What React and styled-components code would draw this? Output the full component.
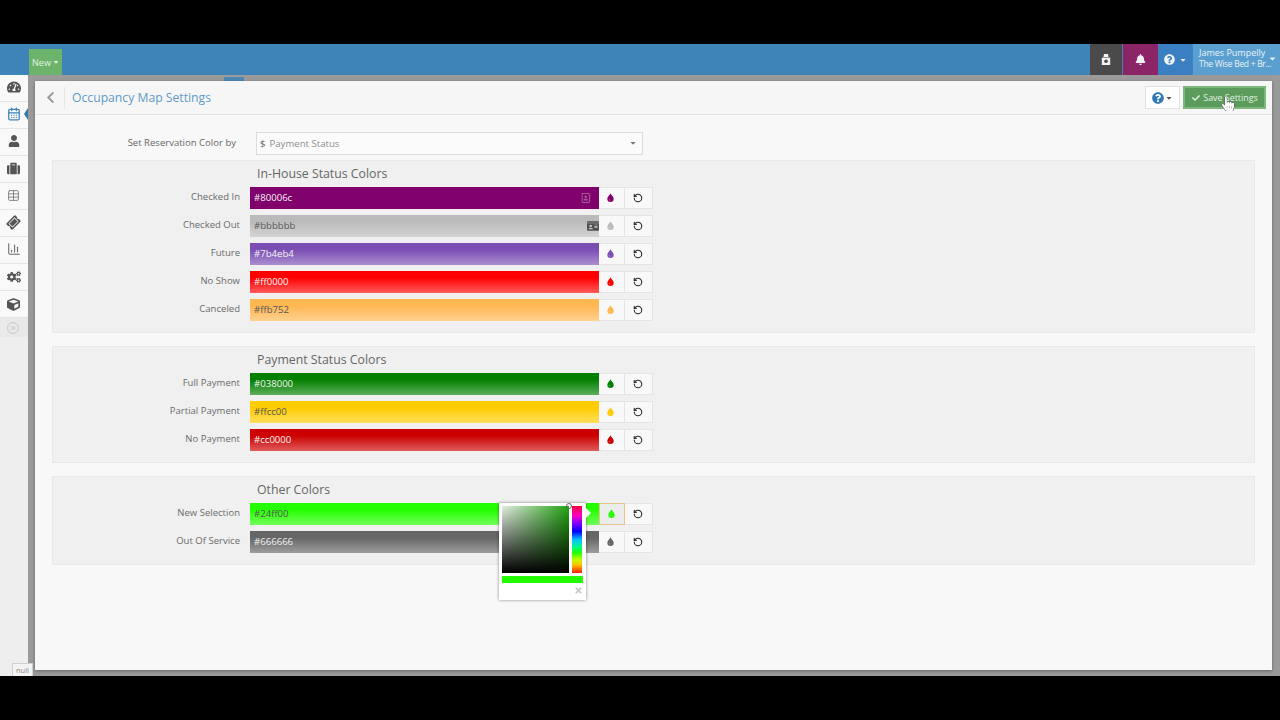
import React from "react";
import styled, { createGlobalStyle } from "styled-components";
import {
  FaTachometerAlt, FaUser, FaSuitcase, FaTicketAlt, FaCogs, FaCube,
  FaCheck, FaQuestionCircle, FaBell, FaChevronLeft, FaIdCard, FaRegAddressBook,
  FaCaretDown, FaHandPointer, FaTimes,
} from "react-icons/fa";
import { RotateCcw, CalendarDays, Table, ChartColumn } from "lucide-react";

const Global = createGlobalStyle`
  html, body { margin: 0; padding: 0; background: #000; }
  body { font-family: "Open Sans", "Liberation Sans", sans-serif; overflow: hidden; }
`;

const Screen = styled.div`
  width: 1280px; height: 720px; background: #000; padding: 44px 0; box-sizing: border-box;
`;
const Frame = styled.div`
  position: relative; width: 1280px; height: 632px; display: flex; flex-direction: column; overflow: hidden;
`;
const TopBar = styled.header`
  height: 31px; flex: none; background: #3f84b8; display: flex; align-items: stretch; padding-left: 29px;
`;
const NewButton = styled.div`
  width: 33px; margin-top: 5px; background: #6cb36c; color: #e4f2e4; font-size: 9px; padding-left: 1px; box-sizing: border-box;
  display: flex; align-items: center; justify-content: center; gap: 1px;
`;
const TopRight = styled.div`
  margin-left: auto; display: flex; align-items: stretch; gap: 1px;
`;
const TopCell = styled.div`
  width: ${p => p.$w}px; background: ${p => p.$bg}; color: #f2f2f2; font-size: 11px;
  display: flex; align-items: center; justify-content: center; gap: ${p => p.$gap || 3}px;
`;
const UserCell = styled.div`
  width: 87px; background: #5b9fd0; color: #e8f2f9; padding: 3px 0 0 6px; box-sizing: border-box; position: relative;
`;
const UserName = styled.div`font-size: 9px; line-height: 11px; white-space: nowrap;`;
const UserOrg = styled.div`font-size: 8.5px; line-height: 11px; white-space: nowrap; letter-spacing: -.3px;`;
const UserCaret = styled.span`
  position: absolute; right: 3px; top: 10px; font-size: 9px; display: flex;
`;
const Main = styled.div`flex: 1; display: flex; min-height: 0;`;
const Sidebar = styled.nav`
  width: 28px; flex: none; background: #eeeeee; display: flex; flex-direction: column;
`;
const SideItem = styled.div`
  height: 27px; box-sizing: border-box; background: #f9f9f9; border-bottom: 1px solid #e6e6e6;
  color: ${p => p.$active ? "#3f84b8" : "#555"}; font-size: 13px; position: relative;
  display: flex; align-items: center; justify-content: center; padding: 0 1px 2px 0;
  &:nth-child(n+8) { padding-bottom: 0; }
`;
const SideArrow = styled.span`
  position: absolute; right: 0; top: 6px; width: 0; height: 0;
  border-style: solid; border-width: 6px 4px 6px 0; border-color: transparent #2f77ad transparent transparent;
`;
const Ticket = styled.span`display: flex; transform: rotate(-45deg);`;
const SideToggle = styled.div`
  height: 19px; background: #e9e9e9; color: #c4c4c4;
  display: flex; align-items: center; justify-content: center; padding-right: 2px;
`;
const Backdrop = styled.div`
  flex: 1; background: #9a9a9a; padding: 6px 8px 6px 7px; position: relative; min-width: 0; display: flex;
`;
const BehindTab = styled.span`
  position: absolute; left: 196px; top: 2px; width: 20px; height: 4px; background: #4c87b5;
`;
const Modal = styled.main`
  flex: 1; background: #f8f8f8; display: flex; flex-direction: column; position: relative;
  box-shadow: 0 1px 3px rgba(0,0,0,.35);
`;
const ModalHead = styled.div`
  height: 34px; flex: none; box-sizing: border-box; background: #f6f6f6; border-bottom: 1px solid #e4e4e4;
  display: flex; align-items: center; padding-right: 6px;
`;
const BackCell = styled.div`
  width: 30px; height: 22px; color: #999; font-size: 13px; border-right: 1px solid #e6e6e6; margin-right: 7px;
  display: flex; align-items: center; justify-content: center; padding-left: 1px; box-sizing: border-box;
`;
const Title = styled.h1`
  margin: 0; font-size: 12.2px; font-weight: 400; color: #5f9bc9;
`;
const HeadActions = styled.div`margin-left: auto; display: flex; align-items: center; gap: 3px;`;
const HelpButton = styled.div`
  width: 35px; height: 23px; box-sizing: border-box; background: #fff; border: 1px solid #e2e2e2; color: #2f77b5;
  font-size: 12px; display: flex; align-items: center; justify-content: center; gap: 1px;
`;
const HelpCaret = styled.span`color: #555; font-size: 8px; display: flex;`;
const SaveButton = styled.div`
  width: 83px; height: 23px; box-sizing: border-box; background: #5b9b5b; border: 2px solid #7cb87c; color: #e3f0e3;
  font-size: 8.9px; display: flex; align-items: center; justify-content: center; gap: 3px; white-space: nowrap;
  position: relative; padding-left: 1px;
`;
const Cursor = styled.span`
  position: absolute; left: 36px; top: 9px; font-size: 14px; color: #fff; display: flex;
  filter: drop-shadow(0 0 .6px #000) drop-shadow(0 0 .6px #000);
`;
const Body = styled.div`padding: 16px 17px 0; display: flex; flex-direction: column;`;
const SelectRow = styled.div`display: flex; align-items: center; height: 24px; margin-bottom: 5px;`;
const SelectLabel = styled.label`
  width: 184px; margin-right: 20px; text-align: right; font-size: 9.5px; color: #666; padding-bottom: 2px; letter-spacing: .02px;
`;
const Select = styled.div`
  width: 387px; height: 23px; box-sizing: border-box; background: #fbfbfb; border: 1px solid #dcdcdc;
  font-size: 9.6px; color: #8e8e8e; display: flex; align-items: center; padding: 0 4px 0 3px; gap: 4px;
`;
const Dollar = styled.span`color: #666;`;
const SelectCaret = styled.span`margin-left: auto; color: #777; font-size: 8px; display: flex; padding-right: 1px;`;
const Section = styled.section`
  background: #f0f0f0; border: 1px solid #e8e8e8; margin-bottom: 13px; padding: 5px 0 ${p => p.$bottom}px;
  width: 1203px; box-sizing: border-box;
`;
const SectionTitle = styled.h2`
  margin: 0 0 5px 204px; font-size: 12.3px; line-height: 16px; font-weight: 400; color: #666;
`;
const Rows = styled.div`display: flex; flex-direction: column; gap: 6px;`;
const Row = styled.div`display: flex; align-items: stretch; height: 22px;`;
const RowLabel = styled.div`
  width: 187px; margin-right: 10px; text-align: right; font-size: 9.5px; line-height: 19px; color: #6a6a6a; letter-spacing: .02px;
`;
const Swatch = styled.div`
  width: 349px; flex: none; box-sizing: border-box; padding: 0 0 1px 4px; font-size: 9.6px; font-weight: 500; position: relative;
  display: flex; align-items: center; justify-content: space-between;
  color: ${p => p.$light ? "#555" : "#f4f4f4"};
  background-color: ${p => p.$color};
  background-image: ${p => p.$flat ? "none" : "linear-gradient(rgba(255,255,255,0) 30%, rgba(255,255,255,.36) 100%)"};
`;
const SwatchMark = styled.span`
  color: ${p => p.$color}; font-size: ${p => p.$size}px; display: flex; padding-right: ${p => p.$inset}px;
`;
const IconButton = styled.div`
  width: ${p => p.$w}px; flex: none; box-sizing: border-box;
  background: ${p => p.$active ? "#ececec" : "#f8f8f8"};
  border: 1px solid ${p => p.$active ? "#e8c48c" : "#e4e4e4"};
  border-left-width: ${p => p.$active ? 1 : 0}px;
  color: ${p => p.$color || "#2e2e2e"};
  display: flex; align-items: center; justify-content: center; padding: 0 2px ${p => p.$lift || 0}px 0;
`;
const Picker = styled.div`
  position: absolute; left: 464px; top: 422px; width: 87px; height: 97px; background: #fff; z-index: 3;
  box-shadow: 0 0 3px rgba(0,0,0,.45);
`;
const PickerArrow = styled.span`
  position: absolute; left: 87px; top: 5px; width: 0; height: 0;
  border-style: solid; border-width: 5px 0 5px 5px; border-color: transparent transparent transparent #fff;
`;
const PickerField = styled.div`
  position: absolute; left: 3px; top: 3px; width: 67px; height: 67px;
  background: linear-gradient(to bottom, rgba(0,0,0,0), #000), linear-gradient(to right, #e4ece2, #22a412);
`;
const PickerDot = styled.span`
  position: absolute; left: 67px; top: 0; width: 4px; height: 4px; border-radius: 50%; border: 1px solid #666;
  background: transparent; transform: translate(-3px, -3px);
`;
const HueBar = styled.div`
  position: absolute; left: 73px; top: 3px; width: 10px; height: 67px;
  background: linear-gradient(to bottom, #ff0040, #ff00c0 14%, #8000ff 26%, #0000ff 38%, #00c0ff 50%, #00ff80 62%, #24ff00 70%, #c0ff00 80%, #ffc000 88%, #ff2000 100%);
`;
const PickerPreview = styled.div`
  position: absolute; left: 3px; top: 73px; width: 81px; height: 7px; background: #24ff00;
`;
const PickerClose = styled.span`
  position: absolute; right: 3px; top: 83px; color: #c8c8c8; font-size: 9px; display: flex;
`;
const NullTag = styled.div`
  position: absolute; left: 12px; bottom: 0; height: 13px; width: 21px; box-sizing: border-box; z-index: 4;
  background: #f4f4f4; border: 1px solid #d0d0d0; border-bottom: 0; color: #888; font-size: 7.5px;
  display: flex; align-items: center; justify-content: center;
`;

const Drop = () => (
  <svg width="7" height="9" viewBox="0 0 10 13" fill="currentColor" aria-hidden="true">
    <path d="M5 .3C5.5 3 9.6 5 9.6 8.4a4.6 4.6 0 0 1-9.2 0C.4 5 4.5 3 5 .3z" />
    <path d="M3 8.6c0 1.2.8 2 1.8 2.1" fill="none" stroke="#fff" strokeOpacity=".45" strokeWidth="1" />
  </svg>
);

const LockBag = () => (
  <svg width="10" height="11" viewBox="0 0 10 11" fill="currentColor" aria-hidden="true">
    <path d="M3 0h4l.6 3H2.4z" />
    <path d="M.8 3.6h8.4V11H.8z" />
    <circle cx="5" cy="7.2" r="1.8" fill="#4a4a4a" />
  </svg>
);

const ToggleIcon = () => (
  <svg width="12" height="12" viewBox="0 0 12 12" fill="none" stroke="currentColor" aria-hidden="true">
    <circle cx="6" cy="6" r="5.4" strokeWidth=".9" />
    <path d="M3.8 4 5.8 6l-2 2M6.3 4l2 2-2 2" strokeWidth="1" />
  </svg>
);

const sideIcons = [
  <FaTachometerAlt size={14} />,
  <CalendarDays size={14} strokeWidth={2.2} />,
  <FaUser size={12} />,
  <FaSuitcase size={13} />,
  <Table size={13} strokeWidth={1.6} color="#777" />,
  <Ticket><FaTicketAlt size={13} /></Ticket>,
  <ChartColumn size={14} strokeWidth={1.8} color="#666" />,
  <FaCogs size={14} />,
  <FaCube size={13} />,
];

const sections = [
  { title: "In-House Status Colors", bottom: 11, rows: [
    { label: "Checked In", hex: "#80006c", flat: true, mark: FaRegAddressBook, markColor: "#a8589c", markSize: 10, inset: 8 },
    { label: "Checked Out", hex: "#bbbbbb", light: true, mark: FaIdCard, markColor: "#505050", markSize: 12, inset: 0 },
    { label: "Future", hex: "#7b4eb4" },
    { label: "No Show", hex: "#ff0000" },
    { label: "Canceled", hex: "#ffb752", light: true },
  ]},
  { title: "Payment Status Colors", bottom: 11, rows: [
    { label: "Full Payment", hex: "#038000" },
    { label: "Partial Payment", hex: "#ffcc00", light: true },
    { label: "No Payment", hex: "#cc0000" },
  ]},
  { title: "Other Colors", bottom: 11, rows: [
    { label: "New Selection", hex: "#24ff00", light: true, active: true },
    { label: "Out Of Service", hex: "#666666" },
  ]},
];

export default function App() {
  return (
    <Screen>
      <Global />
      <Frame>
        <TopBar>
          <NewButton>New<FaCaretDown size={8} /></NewButton>
          <TopRight>
            <TopCell $w={32} $bg="#4a4a4a"><LockBag /></TopCell>
            <TopCell $w={35} $bg="#8c2468"><FaBell size={11} /></TopCell>
            <TopCell $w={33} $bg="#3a7fc1" $gap={4}><FaQuestionCircle size={11} /><FaCaretDown size={8} /></TopCell>
            <UserCell>
              <UserName>James Pumpelly</UserName>
              <UserOrg>The Wise Bed + Br...</UserOrg>
              <UserCaret><FaCaretDown /></UserCaret>
            </UserCell>
          </TopRight>
        </TopBar>
        <Main>
          <Sidebar>
            {sideIcons.map((icon, i) => (
              <SideItem key={i} $active={i === 1}>
                {icon}
                {i === 1 && <SideArrow />}
              </SideItem>
            ))}
            <SideToggle><ToggleIcon /></SideToggle>
          </Sidebar>
          <Backdrop>
            <BehindTab />
            <Modal>
              <ModalHead>
                <BackCell><FaChevronLeft /></BackCell>
                <Title>Occupancy Map Settings</Title>
                <HeadActions>
                  <HelpButton><FaQuestionCircle /><HelpCaret><FaCaretDown /></HelpCaret></HelpButton>
                  <SaveButton>
                    <FaCheck size={8} />Save Settings
                    <Cursor><FaHandPointer /></Cursor>
                  </SaveButton>
                </HeadActions>
              </ModalHead>
              <Body>
                <SelectRow>
                  <SelectLabel>Set Reservation Color by</SelectLabel>
                  <Select><Dollar>$</Dollar>Payment Status<SelectCaret><FaCaretDown /></SelectCaret></Select>
                </SelectRow>
                {sections.map(s => (
                  <Section key={s.title} $bottom={s.bottom}>
                    <SectionTitle>{s.title}</SectionTitle>
                    <Rows>
                      {s.rows.map(r => (
                        <Row key={r.label}>
                          <RowLabel>{r.label}</RowLabel>
                          <Swatch $color={r.hex} $flat={r.flat} $light={r.light}>
                            {r.hex}
                            {r.mark && <SwatchMark $color={r.markColor} $size={r.markSize} $inset={r.inset}><r.mark /></SwatchMark>}
                          </Swatch>
                          <IconButton $w={26} $lift={2} $color={r.hex} $active={r.active}><Drop /></IconButton>
                          <IconButton $w={28}><RotateCcw size={10} strokeWidth={2.6} /></IconButton>
                        </Row>
                      ))}
                    </Rows>
                  </Section>
                ))}
              </Body>
              <Picker>
                <PickerArrow />
                <PickerField><PickerDot /></PickerField>
                <HueBar />
                <PickerPreview />
                <PickerClose><FaTimes /></PickerClose>
              </Picker>
            </Modal>
          </Backdrop>
        </Main>
        <NullTag>null</NullTag>
      </Frame>
    </Screen>
  );
}
